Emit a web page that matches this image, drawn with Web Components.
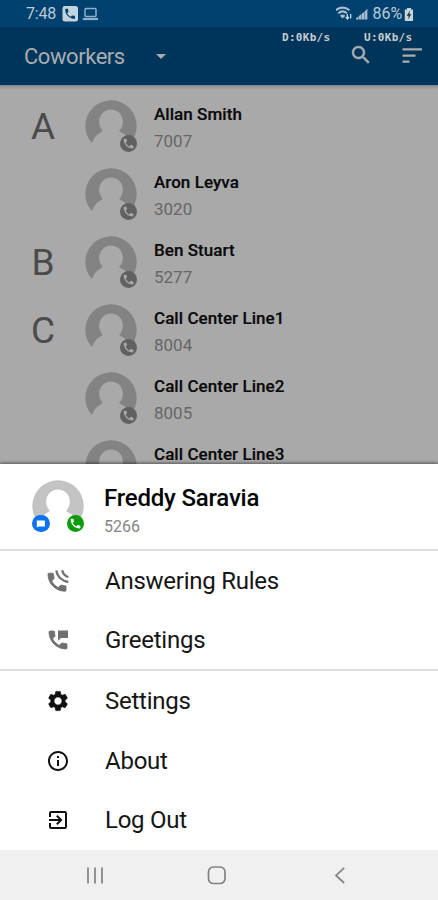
<!DOCTYPE html>
<html lang="en">
<head>
<meta charset="utf-8">
<meta name="viewport" content="width=device-width, initial-scale=1">
<title>Coworkers</title>
<style>
  html, body { margin: 0; height: 100%; }
  body { font-family: Roboto, "Liberation Sans", sans-serif; overflow: hidden; }
</style>
</head>
<body>
<phone-screen>
  <status-bar slot="top" time="7:48" battery="86%"></status-bar>
  <tool-bar slot="top" down="D:0Kb/s" up="U:0Kb/s">Coworkers</tool-bar>

  <contact-row letter="A" ext="7007">Allan Smith</contact-row>
  <contact-row ext="3020">Aron Leyva</contact-row>
  <contact-row letter="B" ext="5277">Ben Stuart</contact-row>
  <contact-row letter="C" ext="8004">Call Center Line1</contact-row>
  <contact-row ext="8005">Call Center Line2</contact-row>
  <contact-row>Call Center Line3</contact-row>

  <bottom-sheet slot="sheet">
    <profile-header slot="header" ext="5266">Freddy Saravia</profile-header>
    <menu-group>
      <menu-item icon="answering" tone="#707070">Answering Rules</menu-item>
      <menu-item icon="greetings" tone="#707070">Greetings</menu-item>
    </menu-group>
    <menu-group>
      <menu-item icon="settings">Settings</menu-item>
      <menu-item icon="info">About</menu-item>
      <menu-item icon="logout">Log Out</menu-item>
    </menu-group>
  </bottom-sheet>
  <nav-bar slot="sheet"></nav-bar>
</phone-screen>

<script>
(function () {
  const CALL = 'M6.62 10.79c1.44 2.83 3.76 5.14 6.59 6.59l2.2-2.2c.27-.27.67-.36 1.02-.24 1.12.37 2.33.57 3.57.57.55 0 1 .45 1 1V20c0 .55-.45 1-1 1-9.39 0-17-7.61-17-17 0-.55.45-1 1-1h3.5c.55 0 1 .45 1 1 0 1.25.2 2.45.57 3.57.11.35.03.74-.25 1.02l-2.2 2.2z'

  const icons = {
    call: `<path d="${CALL}"/>`,
    chat: '<path d="M4 3.500h17a1.500 1.500 0 0 1 1.500 1.500v12.500a1.500 1.500 0 0 1-1.500 1.500H6l-4 2.500V5a1.500 1.500 0 0 1 2-1.500z"/>',
    answering: `<g transform="translate(-1 1.200)"><path d="${CALL}" stroke="currentColor" stroke-width=".9"/></g>
      <g fill="none" stroke="currentColor" stroke-width="2.300">
        <path d="M10.300 1.500c.5 3.200 1.600 5.600 3.700 7.500s4.700 3.400 8.300 4"/>
        <path d="M16.200 1.200c.4 2 1.100 3.400 2.200 4.500s2.300 1.900 4 2.300"/>
      </g>`,
    greetings: `<path d="${CALL}" stroke="currentColor" stroke-width=".8"/><path d="M12 2.500v10.300l3-2.800h7V2.500z"/>`,
    settings: '<path stroke="currentColor" stroke-width=".6" stroke-linejoin="round" d="M19.14 12.94c.04-.3.06-.61.06-.94 0-.32-.02-.64-.07-.94l2.03-1.58c.18-.14.23-.41.12-.61l-1.92-3.32c-.12-.22-.37-.29-.59-.22l-2.39.96c-.5-.38-1.03-.7-1.62-.94l-.36-2.54c-.04-.24-.24-.41-.48-.41h-3.84c-.24 0-.43.17-.47.41l-.36 2.54c-.59.24-1.13.57-1.62.94l-2.39-.96c-.22-.08-.47 0-.59.22L2.74 8.87c-.12.21-.08.47.12.61l2.03 1.58c-.05.3-.09.63-.09.94s.02.64.07.94l-2.03 1.58c-.18.14-.23.41-.12.61l1.92 3.32c.12.22.37.29.59.22l2.39-.96c.5.38 1.03.7 1.62.94l.36 2.54c.05.24.24.41.48.41h3.84c.24 0 .44-.17.47-.41l.36-2.54c.59-.24 1.13-.56 1.62-.94l2.39.96c.22.08.47 0 .59-.22l1.92-3.32c.12-.22.07-.47-.12-.61l-2.01-1.58zM12 16c-2.200 0-4-1.800-4-4s1.800-4 4-4 4 1.800 4 4-1.800 4-4 4z"/>',
    info: '<path d="M11 7h2v2h-2zm0 4h2v6h-2zm1-9C6.480 2 2 6.480 2 12s4.480 10 10 10 10-4.480 10-10S17.520 2 12 2zm0 18c-4.410 0-8-3.590-8-8s3.590-8 8-8 8 3.590 8 8-3.590 8-8 8z"/>',
    logout: '<path d="M10.090 15.590L11.500 17l5-5-5-5-1.410 1.410L12.670 11H3v2h9.670l-2.580 2.590zM19 3H5c-1.110 0-2 .9-2 2v4h2V5h14v14H5v-4H3v4c0 1.100.89 2 2 2h14c1.100 0 2-.9 2-2V5c0-1.100-.9-2-2-2z"/>',
    search: '<path stroke="currentColor" stroke-width=".4" d="M15.500 14h-.79l-.28-.27C15.410 12.590 16 11.110 16 9.500 16 5.910 13.090 3 9.500 3S3 5.910 3 9.500 5.910 16 9.500 16c1.610 0 3.090-.59 4.230-1.570l.27.28v.79l5 4.990L20.490 19l-4.990-5zm-6 0C7.010 14 5 11.990 5 9.500S7.010 5 9.500 5 14 7.010 14 9.500 11.990 14 9.500 14z"/>',
    sort: '<path d="M2.500 17.500h7v2.300h-7zM2.500 5.300v2.300h19.500V5.300zm0 6.100h13v2.300h-13z"/>'
  }

  // base class: renders template() into an open root
  class UiElement extends HTMLElement {
    connectedCallback () {
      if (this.shadowRoot) return
      this.attachShadow({mode: 'open'})
      const template = document.createElement('template')
      template.innerHTML = this.template()
      this.shadowRoot.appendChild(template.content.cloneNode(true))
    }

    attr (name) {
      return this.getAttribute(name) || ''
    }
  }

  class UiIcon extends UiElement {
    template () {
      return `
        <style>
          :host { display: block; width: 24px; height: 24px; flex: none; }
          svg { display: block; width: 100%; height: 100%; fill: currentColor; }
        </style>
        <svg viewBox="0 0 24 24">${icons[this.attr('name')]}</svg>
      `
    }
  }

  class PhoneScreen extends UiElement {
    template () {
      return `
        <style>
          :host { display: flex; flex-direction: column; height: 900px; overflow: hidden; background: #a9a9a9; }
          .list { flex: 1; min-height: 0; overflow: hidden; padding-top: 7px; box-sizing: border-box;
            background: linear-gradient(#76858f 0, #989898 2px, #a9a9a9 5px); }
          .sheet { flex: none; }
        </style>
        <slot name="top"></slot>
        <div class="list"><slot></slot></div>
        <div class="sheet"><slot name="sheet"></slot></div>
      `
    }
  }

  class StatusBar extends UiElement {
    template () {
      return `
        <style>
          :host { display: flex; align-items: center; justify-content: space-between; flex: none; height: 27px;
            padding: 0 24px 0 26px; box-sizing: border-box; background: #004170; color: #bccbd6; font-size: 16px; }
          div { display: flex; align-items: center; }
          svg { display: block; }
          .time { width: 35.500px; letter-spacing: -.2px; }
          .pct { letter-spacing: -.1px; }
        </style>
        <div>
          <span class="time">${this.attr('time')}</span>
          <svg width="37" height="16" viewBox="0 0 37 16">
            <rect x=".5" y="0" width="15.500" height="15.500" rx="2.500" fill="#c3d4df"/>
            <path d="${CALL}" fill="#004170" transform="translate(1.500 1.200) scale(.55)"/>
            <rect x="23" y="2.500" width="11" height="8" rx="1" fill="none" stroke="#8fb0c9" stroke-width="1.500"/>
            <path d="M20.800 13h15.200" stroke="#8fb0c9" stroke-width="2.200"/>
          </svg>
        </div>
        <div>
          <svg width="37" height="16" viewBox="0 0 37 16">
            <g fill="none" stroke="#a5bccc" stroke-width="2.100">
              <path d="M-.2 4.200c4-3.400 9.800-3.400 13.600 0"/>
              <path d="M2.300 7.200c2.600-2.200 6-2.200 8.600 0"/>
            </g>
            <path d="M3.800 9.800c1.800-1.600 3.900-1.600 5.600 0L6.600 12.600z" fill="#a5bccc"/>
            <path d="M11.400 8v4.500m-1.700-1.500l1.700 2 1.700-2M14.700 12.500V8" fill="none" stroke="#c4d3dd" stroke-width="1.300"/>
            <path d="M20 13.500h2.400v-2.900l-2.400 1.700zM22.800 13.500h2.600v-5.400l-2.600 1.900zM25.800 13.500h2.600V5.800l-2.600 1.900zM28.800 13.500h2.600V2.800l-2.600 2.400z" fill="#a5bccc"/>
          </svg>
          <span class="pct">${this.attr('battery')}</span>
          <svg width="10" height="14" viewBox="0 0 10 14" style="margin-left:2px">
            <path d="M3 1h4v1.500h2V14H.8V2.500H3z" fill="#c8d3da"/>
            <path d="M6 3.500L2.700 8.700h2L4 12.500l3.300-5.200h-2z" fill="#12324a"/>
          </svg>
        </div>
      `
    }
  }

  class ToolBar extends UiElement {
    template () {
      return `
        <style>
          :host { display: flex; align-items: center; flex: none; position: relative; height: 58px; box-sizing: border-box;
            padding: 0 14px 0 24px; background: #00355b; color: #a9adb0; }
          .title { width: 132px; font-size: 22px; letter-spacing: -.45px; }
          .caret { border: 5.500px solid transparent; border-top-color: currentColor; border-bottom: 0; }
          .actions { display: flex; gap: 27px; margin-left: auto; padding-bottom: 2px; }
          /* network meter drawn over the app */
          .speed { position: absolute; top: 4px; font: bold 11px/14px "DejaVu Sans Mono", monospace;
            letter-spacing: .3px; color: #c6cbcf; }
          .down { left: 282px; }
          .up { left: 364px; }
        </style>
        <span class="title"><slot></slot></span>
        <span class="caret"></span>
        <span class="actions"><ui-icon name="search"></ui-icon><ui-icon name="sort"></ui-icon></span>
        <span class="speed down">${this.attr('down')}</span>
        <span class="speed up">${this.attr('up')}</span>
      `
    }
  }

  class UserAvatar extends UiElement {
    template () {
      return `
        <style>
          :host { display: block; position: relative; width: 52px; height: 52px; flex: none; }
          svg { display: block; }
          .back { fill: var(--avatar, #838383); }
          .person { fill: var(--surface, #a9a9a9); }
        </style>
        <svg width="52" height="52" viewBox="0 0 52 52">
          <circle class="back" cx="26" cy="26" r="25.700"/>
          <ellipse class="person" cx="26" cy="21.800" rx="11.900" ry="12.300"/>
          <path class="person" d="M18 29h16c-.2 2 .8 2.800 3 3.800 4 1.800 7.500 5.500 9 10.200V53H6v-8c2-5.500 5-10 9-12.200 2.200-1.200 3.200-1.800 3-3.800z"/>
        </svg>
        <slot></slot>
      `
    }
  }

  class AvatarBadge extends UiElement {
    template () {
      const chat = this.attr('icon') === 'chat'
      return `
        <style>
          :host { position: absolute; display: flex; align-items: center; justify-content: center;
            bottom: 0; ${chat ? 'left: 0' : 'right: 0'}; width: 17.500px; height: 17.500px; border-radius: 50%;
            background: ${this.attr('fill')}; color: ${this.attr('ink')}; }
          ui-icon { width: ${chat ? 9.5 : 13}px; height: ${chat ? 9.5 : 13}px; }
        </style>
        <ui-icon name="${this.attr('icon')}"></ui-icon>
      `
    }
  }

  class ContactRow extends UiElement {
    template () {
      return `
        <style>
          :host { display: grid; grid-template-columns: 85px 52px 1fr; align-items: center; height: 68px; }
          .letter { padding: 2px 0 0 1px; text-align: center; font-size: 37px; line-height: 66px; color: #4b4b4b; }
          .text { display: flex; flex-direction: column; gap: 5px; padding: 2px 0 0 17px; }
          .name { font-size: 17px; line-height: 22px; font-weight: 500; letter-spacing: .05px; color: #0a0a0a; -webkit-text-stroke: .2px; }
          .ext { min-height: 22px; font-size: 17px; line-height: 22px; color: #666; }
        </style>
        <span class="letter">${this.attr('letter')}</span>
        <user-avatar><avatar-badge icon="call" fill="#616161" ink="#a9a9a9"></avatar-badge></user-avatar>
        <div class="text">
          <span class="name"><slot></slot></span>
          <span class="ext">${this.attr('ext')}</span>
        </div>
      `
    }
  }

  class BottomSheet extends UiElement {
    template () {
      return `
        <style>
          :host { display: block; height: 386px; background: #fff; box-shadow: 0 -1px 3px rgba(0, 0, 0, .5); position: relative; }
        </style>
        <slot name="header"></slot>
        <slot></slot>
      `
    }
  }

  class ProfileHeader extends UiElement {
    template () {
      return `
        <style>
          :host { display: flex; height: 85px; box-sizing: border-box; padding: 16px 32px 0; gap: 20px;
            --avatar: #c3c3c3; --surface: #fff; }
          .text { display: flex; flex-direction: column; padding-top: 3px; }
          .name { font-size: 24px; line-height: 30px; font-weight: 500; letter-spacing: -.2px; color: #050505; }
          .ext { padding-top: 4px; font-size: 16px; line-height: 20px; color: #858585; }
        </style>
        <user-avatar>
          <avatar-badge icon="chat" fill="#0b72f0" ink="#fff"></avatar-badge>
          <avatar-badge icon="call" fill="#0a9c0a" ink="#fff"></avatar-badge>
        </user-avatar>
        <div class="text">
          <span class="name"><slot></slot></span>
          <span class="ext">${this.attr('ext')}</span>
        </div>
      `
    }
  }

  class MenuGroup extends UiElement {
    template () {
      return `
        <style>
          :host { display: block; border-top: 2px solid #dedede; }
          :host(:last-child) { margin-top: -1px; }
          :host(:last-child) slot { display: block; padding-top: 1px; }
        </style>
        <slot></slot>
      `
    }
  }

  class MenuItem extends UiElement {
    template () {
      return `
        <style>
          :host { display: flex; align-items: center; gap: 35px; height: 59.400px; padding-left: 46px;
            color: #151515; font-size: 24px; letter-spacing: -.25px; }
          ui-icon { color: ${this.attr('tone') || '#111'}; }
        </style>
        <ui-icon name="${this.attr('icon')}"></ui-icon>
        <span><slot></slot></span>
      `
    }
  }

  class NavBar extends UiElement {
    template () {
      return `
        <style>
          :host { display: grid; grid-template-columns: repeat(3, 122.500px); justify-content: center; align-items: center;
            justify-items: center; height: 50px; box-sizing: border-box; padding-right: 4px; background: #f0f0f0; position: relative; }
          svg { display: block; fill: none; stroke: #828282; stroke-width: 1.700; }
        </style>
        <svg width="20" height="20"><path d="M3 2.500v16M10 2.500v16M17 2.500v16"/></svg>
        <svg width="20" height="20"><rect x="1.500" y="2" width="16.500" height="16.500" rx="5"/></svg>
        <svg width="20" height="20"><path d="M14.200 2.800L6 10.500l8.200 7.500"/></svg>
      `
    }
  }

  customElements.define('ui-icon', UiIcon)
  customElements.define('phone-screen', PhoneScreen)
  customElements.define('status-bar', StatusBar)
  customElements.define('tool-bar', ToolBar)
  customElements.define('user-avatar', UserAvatar)
  customElements.define('avatar-badge', AvatarBadge)
  customElements.define('contact-row', ContactRow)
  customElements.define('bottom-sheet', BottomSheet)
  customElements.define('profile-header', ProfileHeader)
  customElements.define('menu-group', MenuGroup)
  customElements.define('menu-item', MenuItem)
  customElements.define('nav-bar', NavBar)
})()
</script>
</body>
</html>
